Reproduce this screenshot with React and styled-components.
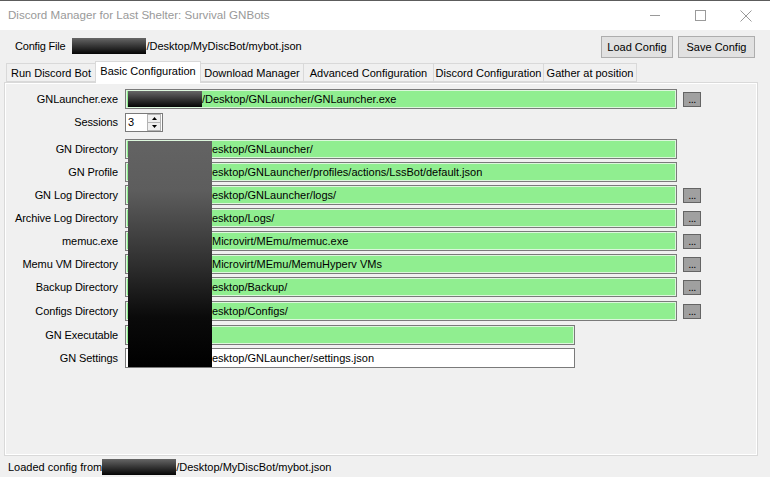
import React from 'react';
import styled, { createGlobalStyle } from 'styled-components';

const Global = createGlobalStyle`
  html, body { margin: 0; padding: 0; background: #f0f0f0; }
  body {
    font-family: "Liberation Sans", Arial, sans-serif;
    font-size: 11px;
    color: #000;
    overflow: hidden;
  }
  #root { width: 770px; height: 477px; }
  * { box-sizing: border-box; }
`;

const Window = styled.div`
  width: 770px;
  height: 477px;
  display: flex;
  flex-direction: column;
  background: #f0f0f0;
  border-top: 1px solid #5c5c5c;
`;

const TitleBar = styled.div`
  height: 29px;
  flex: none;
  background: #fff;
  display: flex;
  align-items: center;
  padding-left: 8px;
`;

const Title = styled.div`
  flex: 1;
  font-size: 11.6px;
  color: #999;
  padding-bottom: 2px;
`;

const Caption = styled.div`
  width: 45px;
  height: 29px;
  display: flex;
  align-items: center;
  justify-content: center;
`;

const Captions = styled.div`
  display: flex;
  margin-right: 2px;
`;

const ConfigBar = styled.div`
  height: 31px;
  flex: none;
  display: flex;
  align-items: center;
  padding: 0 15px;
`;

const Label = styled.span`
  margin-right: 7px;
  letter-spacing: -0.2px;
`;

const Redact = styled.span`
  display: inline-block;
  flex: none;
  width: ${(p) => p.$w}px;
  height: ${(p) => p.$h}px;
  background: linear-gradient(to bottom, #666 0%, #3a3a3a 45%, #050505 100%);
`;

const Spacer = styled.div`
  flex: 1;
`;

const PushButton = styled.button`
  height: 22px;
  width: ${(p) => p.$w}px;
  margin-left: ${(p) => p.$ml || 0}px;
  background: #e1e1e1;
  border: 1px solid #adadad;
  font-family: inherit;
  font-size: 11px;
  color: #000;
  padding: 0;
  margin-top: 2px;
`;

const TabArea = styled.div`
  flex: 1;
  display: flex;
  flex-direction: column;
  margin: 0 12px 0 4px;
`;

const TabStrip = styled.div`
  height: 21px;
  flex: none;
  display: flex;
  align-items: flex-end;
  padding-left: 2px;
  position: relative;
  z-index: 1;
`;

const Tab = styled.div`
  width: ${(p) => p.$w}px;
  height: ${(p) => (p.$active ? 22 : 19)}px;
  margin-bottom: ${(p) => (p.$active ? -1 : 0)}px;
  background: ${(p) => (p.$active ? '#fff' : '#f0f0f0')};
  border: 1px solid #d9d9d9;
  border-bottom: ${(p) => (p.$active ? 'none' : '1px solid #d9d9d9')};
  margin-left: ${(p) => (p.$first ? 0 : -1)}px;
  display: flex;
  align-items: center;
  justify-content: center;
  padding-bottom: ${(p) => (p.$active ? 3 : 0)}px;
  white-space: nowrap;
`;

const Panel = styled.div`
  height: 374px;
  position: relative;
  border: 1px solid #d9d9d9;
  box-shadow: inset 1px 1px 0 #fff, inset -1px -1px 0 #fff;
  padding-top: 6px;
  display: flex;
  flex-direction: column;
`;

const FieldRow = styled.div`
  height: 20px;
  display: flex;
  align-items: center;
  margin-top: ${(p) => (p.$gap === undefined ? 3 : p.$gap)}px;
`;

const FieldLabel = styled.div`
  width: 113px;
  text-align: right;
  margin-right: 7px;
  white-space: nowrap;
  letter-spacing: -0.1px;
`;

const TextBox = styled.div`
  width: ${(p) => (p.$short ? 450 : 552)}px;
  height: 20px;
  border: 1px solid #7a7a7a;
  box-shadow: inset 0 0 0 1px ${(p) => (p.$green ? '#dcf7dc' : '#fff')};
  background: ${(p) => (p.$green ? '#90ee90' : '#fff')};
  display: flex;
  align-items: center;
  padding-left: ${(p) => p.$indent ?? 2}px;
  white-space: nowrap;
  overflow: hidden;
`;

const Browse = styled.div`
  width: 18px;
  height: 15px;
  margin-left: 6px;
  background: #a0a0a0;
  border: 1px solid #646464;
  display: flex;
  align-items: flex-end;
  justify-content: center;
  font-size: 11px;
  line-height: 11px;
  letter-spacing: -0.5px;
  padding-bottom: 1px;
`;

const Spin = styled.div`
  width: 38px;
  height: 19px;
  border: 1px solid #7a7a7a;
  background: #fff;
  display: flex;
  align-items: center;
  padding-left: 2px;
`;

const SpinValue = styled.span`
  flex: 1;
`;

const SpinButtons = styled.div`
  width: 14px;
  height: 17px;
  display: flex;
  flex-direction: column;
  margin-right: 1px;
`;

const SpinHalf = styled.div`
  flex: 1;
  background: #f0f0f0;
  border: 1px solid #b4b4b4;
  margin-top: ${(p) => (p.$down ? -1 : 0)}px;
  display: flex;
  align-items: center;
  justify-content: center;
`;

const BigRedact = styled.div`
  position: absolute;
  left: 123px;
  top: 58px;
  width: 84px;
  height: 226px;
  background: linear-gradient(to bottom, #636363 0%, #5d5d5d 22%, #2e2e2e 55%, #0a0a0a 78%, #000 100%);
`;

const StatusBar = styled.div`
  height: 21px;
  flex: none;
  display: flex;
  align-items: center;
  padding-left: 8px;
  white-space: nowrap;
`;

const tabs = [
  { name: 'Run Discord Bot', w: 90 },
  { name: 'Basic Configuration', w: 106, active: true },
  { name: 'Download Manager', w: 104 },
  { name: 'Advanced Configuration', w: 131 },
  { name: 'Discord Configuration', w: 111 },
  { name: 'Gather at position', w: 94 },
];

const fields = [
  { label: 'GN Directory', value: 'esktop/GNLauncher/', gap: 7 },
  { label: 'GN Profile', value: 'esktop/GNLauncher/profiles/actions/LssBot/default.json' },
  { label: 'GN Log Directory', value: 'esktop/GNLauncher/logs/', browse: true },
  { label: 'Archive Log Directory', value: 'esktop/Logs/', browse: true },
  { label: 'memuc.exe', value: 'Microvirt/MEmu/memuc.exe', browse: true },
  { label: 'Memu VM Directory', value: 'Microvirt/MEmu/MemuHyperv VMs', browse: true },
  { label: 'Backup Directory', value: 'esktop/Backup/', browse: true },
  { label: 'Configs Directory', value: 'esktop/Configs/', browse: true, gap: 4 },
  { label: 'GN Executable', value: '', short: true, gap: 4 },
  { label: 'GN Settings', value: 'esktop/GNLauncher/settings.json', short: true, white: true },
];

const glyph = { stroke: '#9a9a9a', strokeWidth: 1, fill: 'none' };

export default function App() {
  return (
    <>
      <Global />
      <Window>
        <TitleBar>
          <Title>Discord Manager for Last Shelter: Survival GNBots</Title>
          <Captions>
            <Caption>
              <svg width="11" height="11" viewBox="0 0 11 11">
                <line x1="0" y1="5.5" x2="10" y2="5.5" {...glyph} />
              </svg>
            </Caption>
            <Caption>
              <svg width="11" height="11" viewBox="0 0 11 11">
                <rect x="0.5" y="0.5" width="10" height="10" {...glyph} />
              </svg>
            </Caption>
            <Caption>
              <svg width="12" height="12" viewBox="0 0 12 12">
                <line x1="0.5" y1="0.5" x2="11.5" y2="11.5" {...glyph} />
                <line x1="11.5" y1="0.5" x2="0.5" y2="11.5" {...glyph} />
              </svg>
            </Caption>
          </Captions>
        </TitleBar>

        <ConfigBar>
          <Label>Config File</Label>
          <Redact $w={74} $h={16} />
          <span>/Desktop/MyDiscBot/mybot.json</span>
          <Spacer />
          <PushButton $w={72}>Load Config</PushButton>
          <PushButton $w={77} $ml={5}>Save Config</PushButton>
        </ConfigBar>

        <TabArea>
          <TabStrip>
            {tabs.map((t, i) => (
              <Tab key={t.name} $w={t.w} $active={t.active} $first={i === 0}>
                {t.name}
              </Tab>
            ))}
          </TabStrip>
          <Panel>
            <FieldRow $gap={0}>
              <FieldLabel>GNLauncher.exe</FieldLabel>
              <TextBox $green>
                <Redact $w={74} $h={16} />
                <span>/Desktop/GNLauncher/GNLauncher.exe</span>
              </TextBox>
              <Browse>...</Browse>
            </FieldRow>
            <FieldRow>
              <FieldLabel>Sessions</FieldLabel>
              <Spin>
                <SpinValue>3</SpinValue>
                <SpinButtons>
                  <SpinHalf>
                    <svg width="5" height="3" viewBox="0 0 5 3">
                      <polygon points="2.5,0 5,3 0,3" fill="#000" />
                    </svg>
                  </SpinHalf>
                  <SpinHalf $down>
                    <svg width="5" height="3" viewBox="0 0 5 3">
                      <polygon points="0,0 5,0 2.5,3" fill="#000" />
                    </svg>
                  </SpinHalf>
                </SpinButtons>
              </Spin>
            </FieldRow>
            {fields.map((f) => (
              <FieldRow key={f.label} $gap={f.gap}>
                <FieldLabel>{f.label}</FieldLabel>
                <TextBox $green={!f.white} $short={f.short} $indent={86}>
                  {f.value}
                </TextBox>
                {f.browse && <Browse>...</Browse>}
              </FieldRow>
            ))}
            <BigRedact />
          </Panel>
        </TabArea>

        <StatusBar>
          <span>Loaded config from</span>
          <Redact $w={74} $h={16} />
          <span>/Desktop/MyDiscBot/mybot.json</span>
        </StatusBar>
      </Window>
    </>
  );
}
